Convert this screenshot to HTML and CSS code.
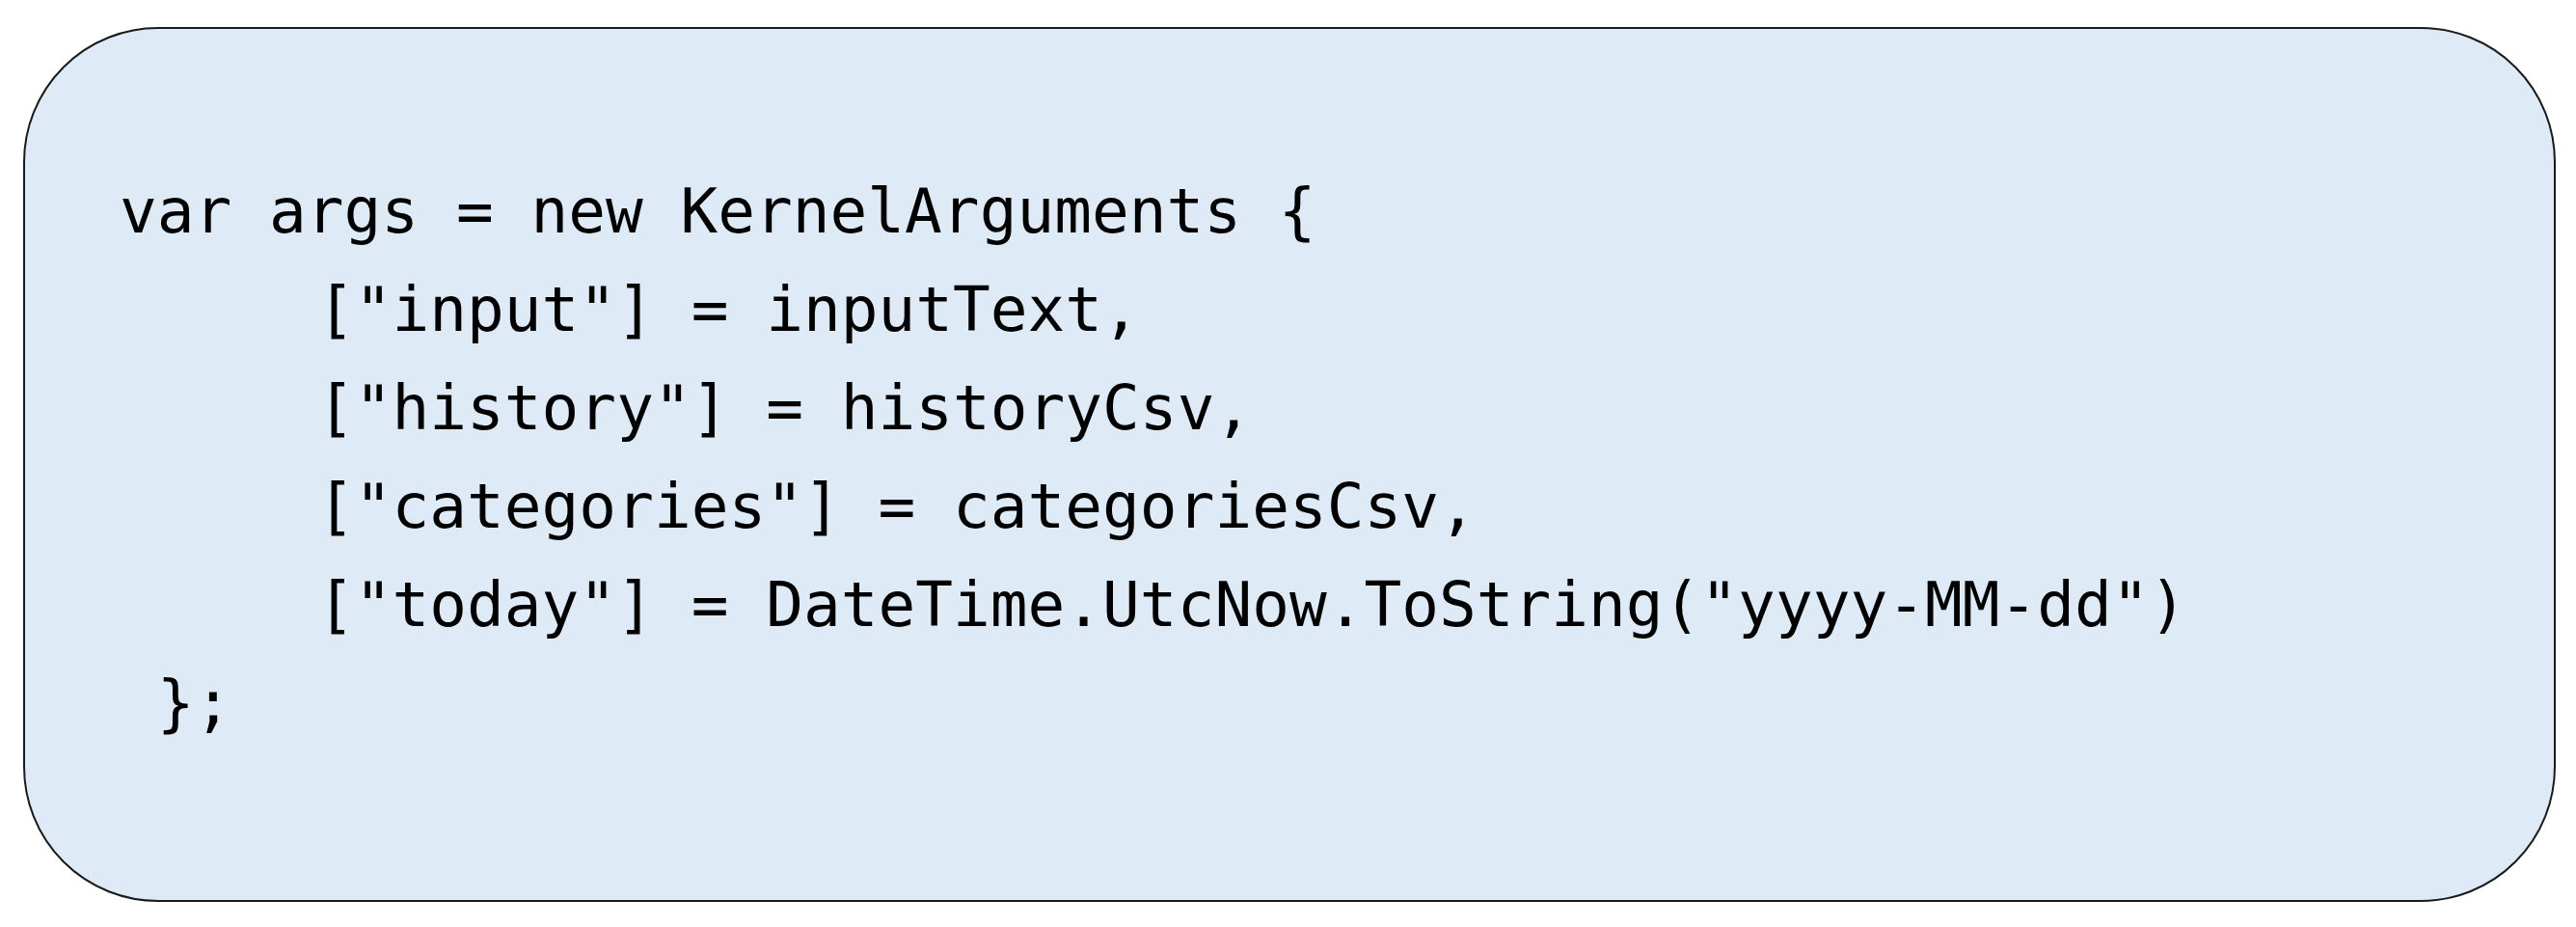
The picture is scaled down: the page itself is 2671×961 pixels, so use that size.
FILE: index.html
```html
<!DOCTYPE html>
<html>
<head>
<meta charset="utf-8">
<link rel="stylesheet" href="styles.css">
</head>
<body>
<div class="card">
  <div class="code">
    <div class="line">var args = new KernelArguments {</div>
    <div class="line indent">["input"] = inputText,</div>
    <div class="line indent">["history"] = historyCsv,</div>
    <div class="line indent">["categories"] = categoriesCsv,</div>
    <div class="line indent">["today"] = DateTime.UtcNow.ToString("yyyy-MM-dd")</div>
    <div class="line"> };</div>
  </div>
</div>
</body>
</html>
```
FILE: styles.css
```css
html, body {
  margin: 0;
  padding: 0;
  background: #ffffff;
}
.card {
  margin: 28px 0 0 24px;
  width: 2626px;
  height: 907px;
  box-sizing: border-box;
  border: 2px solid #1a1a1a;
  border-radius: 140px;
  background: #deeaf6;
  padding: 138px 0 0 98px;
}
.code {
  font-family: "DejaVu Sans Mono", "Liberation Mono", monospace;
  font-size: 64.4px;
  line-height: 102px;
  color: #000000;
}
.line {
  white-space: pre;
}
.indent {
  padding-left: 205px;
}
```
